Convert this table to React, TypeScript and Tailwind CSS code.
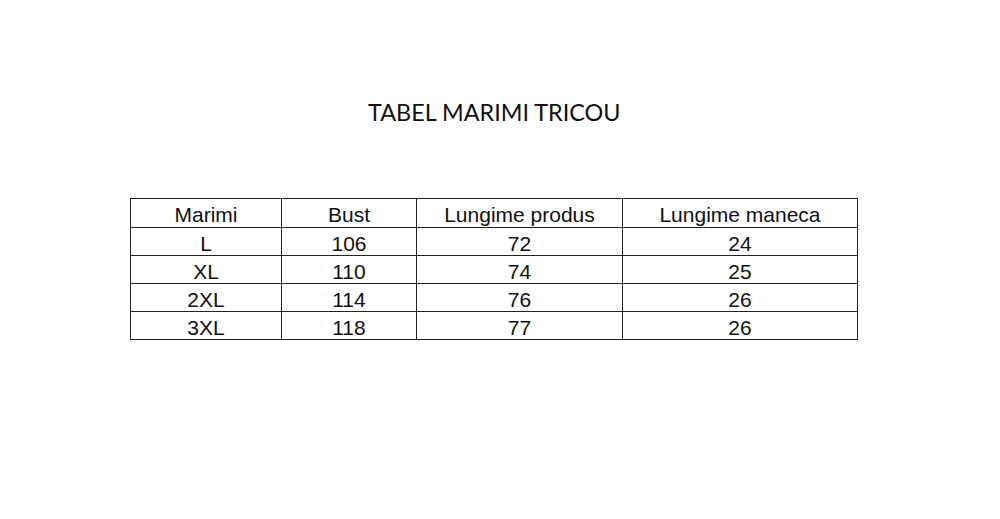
import React from "react";

const rows = [
  ["L", "106", "72", "24"],
  ["XL", "110", "74", "25"],
  ["2XL", "114", "76", "26"],
  ["3XL", "118", "77", "26"],
];

export default function App() {
  return (
    <div className="w-[1000px] h-[519px] bg-white flex flex-col">
      <div className="pt-[98px] pl-[368px] h-[198px]">
        <div
          className="text-[23.4px] leading-[28px] text-[#111] whitespace-nowrap"
          style={{ fontFamily: "Lato, 'Noto Sans', sans-serif" }}
        >
          TABEL MARIMI TRICOU
        </div>
      </div>
      <div className="pl-[130px]">
        <table
          className="table-fixed border-collapse text-[#111] text-[21px] w-[727px]"
          style={{ fontFamily: "'Liberation Sans', Arial, sans-serif" }}
        >
          <colgroup>
            <col className="w-[151px]" />
            <col className="w-[135px]" />
            <col className="w-[206px]" />
            <col className="w-[235px]" />
          </colgroup>
          <thead>
            <tr className="h-[29px]">
              {["Marimi", "Bust", "Lungime produs", "Lungime maneca"].map((h) => (
                <th
                  key={h}
                  className="border border-[#222] font-normal text-center leading-none p-0 pt-[3px]"
                >
                  {h}
                </th>
              ))}
            </tr>
          </thead>
          <tbody>
            {rows.map((r, i) => (
              <tr key={i} className="h-[28px]">
                {r.map((c, j) => (
                  <td
                    key={j}
                    className="border border-[#222] text-center leading-none p-0 pt-[3px]"
                  >
                    {c}
                  </td>
                ))}
              </tr>
            ))}
          </tbody>
        </table>
      </div>
    </div>
  );
}
